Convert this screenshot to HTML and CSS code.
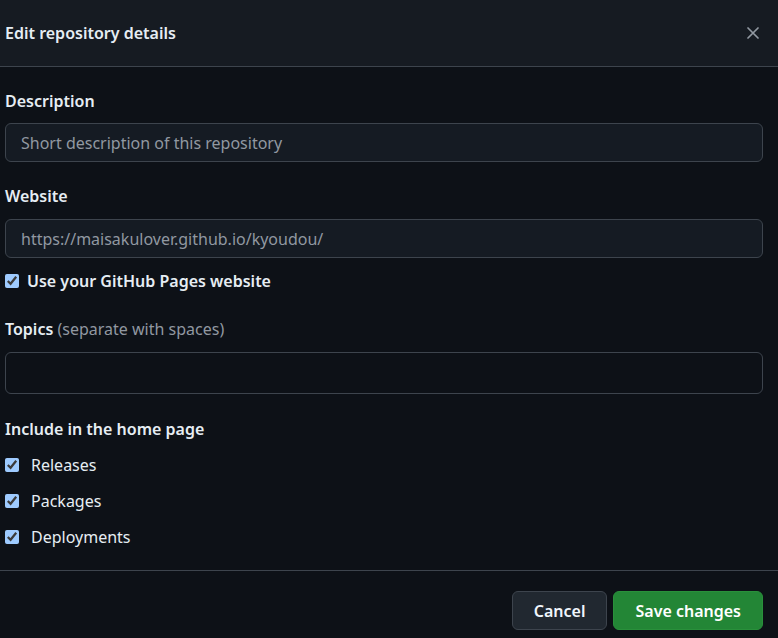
FILE: index.html
```html
<!DOCTYPE html>
<html lang="en">

<head>
    <meta charset="UTF-8">
    <meta name="viewport" content="width=device-width, initial-scale=1.0">
    <title>Edit repository details</title>
    <link rel="stylesheet" href="styles.css">
</head>

<body>

    <div class="dialog">
        <!-- Header -->
        <div class="dialog-header">
            <h1>Edit repository details</h1>
            <button class="close-btn" aria-label="Close">
                <svg width="12" height="12" viewBox="0 0 12 12">
                    <path d="M1 1L11 11M11 1L1 11" stroke="currentColor" stroke-width="1.7" stroke-linecap="round"></path>
                </svg>
            </button>
        </div>

        <!-- Body -->
        <div class="dialog-body">
            <div class="field">
                <label class="field-label" for="description">Description</label>
                <input type="text" id="description" class="text-input" placeholder="Short description of this repository">
            </div>

            <div class="field">
                <label class="field-label" for="website">Website</label>
                <input type="text" id="website" class="text-input" placeholder="https://maisakulover.github.io/kyoudou/">
                <label class="check-row bold">
                    <input type="checkbox" checked> Use your GitHub Pages website
                </label>
            </div>

            <div class="field">
                <label class="field-label" for="topics">Topics <span class="hint">(separate with spaces)</span></label>
                <input type="text" id="topics" class="text-input tall">
            </div>

            <div class="field">
                <div class="field-label short">Include in the home page</div>
                <label class="check-row">
                    <input type="checkbox" checked> Releases
                </label>
                <label class="check-row">
                    <input type="checkbox" checked> Packages
                </label>
                <label class="check-row">
                    <input type="checkbox" checked> Deployments
                </label>
            </div>
        </div>

        <!-- Footer -->
        <div class="dialog-footer">
            <button class="btn">Cancel</button>
            <button class="btn btn-primary">Save changes</button>
        </div>
    </div>

</body>

</html>
```

FILE: styles.css
```css
* {
    margin: 0;
    padding: 0;
    box-sizing: border-box;
}

body {
    font-family: "Segoe UI", "Noto Sans", "Open Sans", sans-serif;
    background-color: #0d1117;
    color: #e6edf3;
    font-size: 16px;
    line-height: 22px;
}

.dialog {
    width: 778px;
    height: 638px;
    display: flex;
    flex-direction: column;
}

/* Header */
.dialog-header {
    height: 67px;
    flex-shrink: 0;
    background-color: #161b22;
    border-bottom: 1px solid #3d444d;
    display: flex;
    align-items: center;
    justify-content: space-between;
    padding: 0 19px 0 5px;
}

.dialog-header h1 {
    font-size: 16px;
    font-weight: 600;
}

.close-btn {
    background: none;
    border: none;
    color: #9198a1;
    display: flex;
    cursor: pointer;
}

/* Body */
.dialog-body {
    padding: 23px 15px 0 5px;
    height: 503px;
    flex-shrink: 0;
}

.field {
    margin-bottom: 23px;
}

.field:nth-child(2) {
    margin-bottom: 26px;
}

.field:nth-child(3) {
    margin-bottom: 24px;
}

.field-label {
    display: block;
    font-weight: 600;
    margin-bottom: 11px;
}

.field:nth-child(n+2) .field-label {
    margin-bottom: 12px;
}

.field-label.short {
    margin-bottom: 7px !important;
}

.hint {
    font-weight: 400;
    color: #9198a1;
}

.text-input {
    display: block;
    width: 100%;
    height: 39px;
    padding: 0 15px;
    font: inherit;
    color: #e6edf3;
    background-color: #151b23;
    border: 1px solid #3d444d;
    border-radius: 6px;
    outline: none;
}

.text-input.tall {
    height: 42px;
    background-color: #0d1117;
}

.text-input::placeholder {
    color: #9198a1;
}

.check-row {
    display: flex;
    align-items: center;
    gap: 12px;
    height: 36px;
}

.check-row.bold {
    font-weight: 600;
    gap: 8px;
    height: 22px;
    margin-top: 12px;
}

.check-row input {
    width: 14px;
    height: 14px;
    accent-color: #9ecbff;
}

/* Footer */
.dialog-footer {
    border-top: 1px solid #3d444d;
    display: flex;
    justify-content: flex-end;
    align-items: flex-start;
    gap: 6px;
    padding: 20px 15px 0 0;
    flex: 1;
}

.btn {
    height: 39px;
    padding: 0 21px;
    font: inherit;
    font-weight: 600;
    color: #f0f6fc;
    background-color: #212830;
    border: 1px solid #3d444d;
    border-radius: 6px;
    cursor: pointer;
}

.btn-primary {
    background-color: #238636;
    border-color: #29903b;
    color: #ffffff;
}
```
